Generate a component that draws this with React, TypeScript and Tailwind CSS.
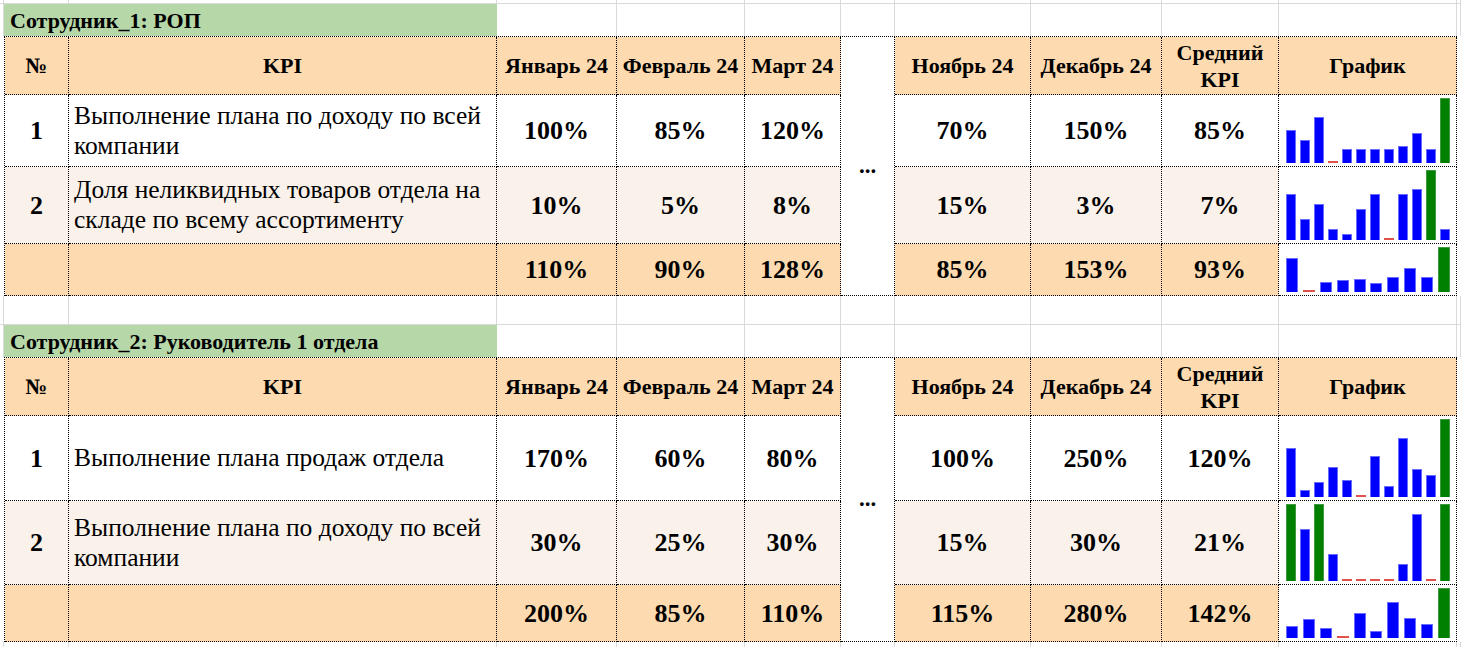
import React from 'react';

interface KpiRow {
  n: string;
  kpi: string;
  values: string[]; // jan, feb, mar, nov, dec, avg
  bars: number[];
}

interface Section {
  title: string;
  rowsClass: string;
  rows: KpiRow[];
  total: { values: string[]; bars: number[] };
}

const sections: Section[] = [
  {
    title: 'Сотрудник_1: РОП',
    rowsClass: 'grid-rows-[58px_72px_77px_52px]',
    rows: [
      {
        n: '1',
        kpi: 'Выполнение плана по доходу по всей компании',
        values: ['100%', '85%', '120%', '70%', '150%', '85%'],
        bars: [33.3, 23.3, 45.7, 0, 14, 14, 14, 14, 17, 30, 14, 64.7],
      },
      {
        n: '2',
        kpi: 'Доля неликвидных товаров отдела на складе по всему ассортименту',
        values: ['10%', '5%', '8%', '15%', '3%', '7%'],
        bars: [45.7, 21.3, 35.7, 11.3, 6.3, 31, 45.7, 0, 45.7, 50.7, 70, 11.3],
      },
    ],
    total: {
      values: ['110%', '90%', '128%', '85%', '153%', '93%'],
      bars: [34, 0, 9.7, 11.7, 13, 9, 15, 24.3, 15, 44.7],
    },
  },
  {
    title: 'Сотрудник_2: Руководитель 1 отдела',
    rowsClass: 'grid-rows-[58px_85px_84px_57px]',
    rows: [
      {
        n: '1',
        kpi: 'Выполнение плана продаж отдела',
        values: ['170%', '60%', '80%', '100%', '250%', '120%'],
        bars: [48.7, 7.3, 14.7, 29.7, 17, 0, 40.7, 11, 59.3, 27.7, 22, 78],
      },
      {
        n: '2',
        kpi: 'Выполнение плана по доходу по всей компании',
        values: ['30%', '25%', '30%', '15%', '30%', '21%'],
        bars: [77, 52, 77, 26.7, 0, 0, 0, 0, 16.7, 67, 0, 77],
      },
    ],
    total: {
      values: ['200%', '85%', '110%', '115%', '280%', '142%'],
      bars: [12, 18.3, 9.7, 0, 24, 6.7, 35, 19, 13, 48],
    },
  },
];

const sheetCols = [4, 65, 428, 120, 128, 96, 54, 136, 131, 117, 178, 4];
const cell = 'border-r border-b border-dotted border-black';

function BlankRow({ h }: { h: string }) {
  return (
    <div className={`flex ${h}`}>
      {sheetCols.map((w, i) => (
        <div key={i} className="shrink-0 border-r border-b border-[#dadada]" style={{ width: w }} />
      ))}
    </div>
  );
}

function Spark({ data }: { data: number[] }) {
  const max = Math.max(...data);
  return (
    <div className="flex h-full items-end">
      {data.map((v, i) => (
        <div key={i} className="flex h-full flex-1 items-end justify-center">
          {v === 0 ? (
            <div className="h-[2px] w-[72%] bg-[#e0524c]" />
          ) : v === max ? (
            <div className="w-[72%] border-x border-t border-[#3f9a3f] bg-[#008000]" style={{ height: `${(v / max) * 100}%` }} />
          ) : (
            <div className="w-[72%] border-x border-t border-[#6a6aff] bg-[#0000ff]" style={{ height: `${(v / max) * 100}%` }} />
          )}
        </div>
      ))}
    </div>
  );
}

function Table({ s }: { s: Section }) {
  const head = 'flex items-center justify-center bg-[#fddaaf] text-center text-[22px] font-bold leading-[27px] whitespace-nowrap';
  const val = 'flex items-center justify-center text-[26px] font-bold';
  return (
    <>
      {/* title */}
      <div className="flex h-[32px]">
        <div className="w-[4px] shrink-0 border-r border-[#dadada]" />
        <div className="flex w-[493px] shrink-0 items-center bg-[#b6d7a8] pl-[6px] text-[22px] font-bold">{s.title}</div>
        {sheetCols.slice(3).map((w, i) => (
          <div key={i} className="shrink-0 border-r border-[#dadada]" style={{ width: w }} />
        ))}
      </div>

      <div className="flex">
        <div className="w-[4px] shrink-0" />
        <div
          className={`grid grid-cols-[64px_428px_120px_128px_96px_54px_136px_131px_117px_178px] ${s.rowsClass} border-l border-t border-dotted border-black`}
        >
          <div className={`${cell} col-start-6 row-span-4 row-start-1 flex items-center justify-center bg-white text-[23px] font-bold`}>...</div>

          <div className={`${cell} ${head}`}>№</div>
          <div className={`${cell} ${head}`}>KPI</div>
          <div className={`${cell} ${head}`}>Январь 24</div>
          <div className={`${cell} ${head}`}>Февраль 24</div>
          <div className={`${cell} ${head}`}>Март 24</div>
          <div className={`${cell} ${head}`}>Ноябрь 24</div>
          <div className={`${cell} ${head}`}>Декабрь 24</div>
          <div className={`${cell} ${head}`}>
            Средний
            <br />
            KPI
          </div>
          <div className={`${cell} ${head}`}>График</div>

          {s.rows.map((r, idx) => {
            const bg = idx === 0 ? 'bg-white' : 'bg-[#f9f1ea]';
            return (
              <React.Fragment key={r.n}>
                <div className={`${cell} ${bg} ${val}`}>{r.n}</div>
                <div className={`${cell} ${bg} flex items-center pl-[5px] pr-[4px] text-[25.5px] leading-[30px]`}>{r.kpi}</div>
                {r.values.map((v, i) => (
                  <div key={i} className={`${cell} ${bg} ${val}`}>{v}</div>
                ))}
                <div className={`${cell} bg-white py-[3px] pl-[5px] pr-[4px]`}>
                  <Spark data={r.bars} />
                </div>
              </React.Fragment>
            );
          })}

          <div className={`${cell} bg-[#fddaaf]`} />
          <div className={`${cell} bg-[#fddaaf]`} />
          {s.total.values.map((v, i) => (
            <div key={i} className={`${cell} bg-[#fddaaf] ${val}`}>{v}</div>
          ))}
          <div className={`${cell} bg-white py-[3px] pl-[5px] pr-[4px]`}>
            <Spark data={s.total.bars} />
          </div>
        </div>
      </div>
    </>
  );
}

export default function App() {
  return (
    <div className="h-[647px] w-[1461px] overflow-hidden bg-white font-['Liberation_Serif','Times_New_Roman',serif] text-black">
      <BlankRow h="h-[4px]" />
      <Table s={sections[0]} />
      <BlankRow h="h-[29px]" />
      <Table s={sections[1]} />
      <BlankRow h="h-[10px]" />
    </div>
  );
}
